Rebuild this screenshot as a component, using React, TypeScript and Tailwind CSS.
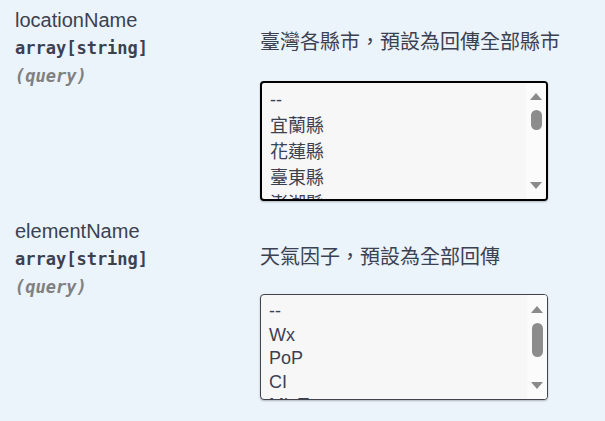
import React from "react";

const counties = [
  "--",
  "宜蘭縣",
  "花蓮縣",
  "臺東縣",
  "澎湖縣",
  "金門縣",
  "連江縣",
  "臺北市",
  "新北市",
  "桃園市",
  "臺中市",
  "臺南市",
  "高雄市",
  "基隆市",
  "新竹縣",
  "新竹市",
  "苗栗縣",
  "彰化縣",
  "南投縣",
  "雲林縣",
  "嘉義縣",
  "嘉義市",
  "屏東縣",
];

const elements = ["--", "Wx", "PoP", "CI", "MinT", "MaxT"];

const sans = "font-['Liberation_Sans','Noto_Sans_CJK_TC',sans-serif]";
const mono = "font-['DejaVu_Sans_Mono','Liberation_Mono',monospace]";

function Arrow({ down }: { down?: boolean }) {
  return (
    <svg width="12" height="7" viewBox="0 0 12 7" className="shrink-0">
      <path d={down ? "M0 0H12L6 7Z" : "M6 0L12 7H0Z"} fill="#8a8a8a" />
    </svg>
  );
}

interface ListProps {
  options: string[];
  focused?: boolean;
  rowClass: string;
  listClass: string;
  boxClass: string;
  barClass: string;
  thumbClass: string;
}

// multi-select listbox, drawn by hand so the classic scrollbar shows
function ListBox({ options, focused, rowClass, listClass, boxClass, barClass, thumbClass }: ListProps) {
  return (
    <div
      role="listbox"
      aria-multiselectable
      className={`${sans} flex w-[288px] overflow-hidden rounded-[4px] bg-[#f7f7f7] text-[18px] text-[#3b4151] shadow-[0_1px_2px_0_rgba(0,0,0,0.25)] ${
        focused ? "border-2 border-black" : "border border-[#41444e]"
      } ${boxClass}`}
    >
      <div className={`min-w-0 flex-1 overflow-hidden ${listClass}`}>
        {options.map((o) => (
          <div key={o} role="option" className={`whitespace-nowrap px-[8px] ${rowClass}`}>
            {o}
          </div>
        ))}
      </div>
      <div className={`flex w-[20px] shrink-0 flex-col items-center bg-[#fbfbfb] ${barClass}`}>
        <Arrow />
        <div className={`w-[11px] rounded-full bg-[#8c8c8c] ${thumbClass}`} />
        <div className="flex-1" />
        <Arrow down />
      </div>
    </div>
  );
}

interface ParamProps {
  name: string;
  description: string;
  descClass: string;
  gapClass: string;
  children: React.ReactNode;
}

function ParamRow({ name, description, descClass, gapClass, children }: ParamProps) {
  return (
    <div className="flex">
      <div className="w-[260px] shrink-0 pl-[15px] pt-[9px]">
        <div className={`${sans} text-[20px] leading-[23px] text-[#3b4151]`}>{name}</div>
        <div className={`${mono} mt-[6px] text-[17px] leading-[20px] font-bold text-[#3b4151]`}>
          array[string]
        </div>
        <div className={`${mono} mt-[8px] text-[17px] leading-[20px] font-semibold italic text-[#808080]`}>
          (query)
        </div>
      </div>
      <div className="flex flex-col">
        <p className={`${sans} text-[20px] leading-[24px] text-[#3b4151] ${descClass}`}>{description}</p>
        <div className={gapClass}>{children}</div>
      </div>
    </div>
  );
}

export default function App() {
  return (
    <div className="h-[421px] w-[605px] overflow-hidden bg-[#ebf3fb]">
      <ParamRow
        name="locationName"
        description="臺灣各縣市，預設為回傳全部縣市"
        descClass="mt-[30px]"
        gapClass="mt-[27px]"
      >
        <ListBox
          options={counties}
          focused
          rowClass="leading-[26px]"
          listClass="pt-[4px]"
          boxClass="h-[120px]"
          barClass="pt-[10px] pb-[10px]"
          thumbClass="mt-[10px] h-[20px]"
        />
      </ParamRow>
      <div className="mt-[10px]">
        <ParamRow
          name="elementName"
          description="天氣因子，預設為全部回傳"
          descClass="mt-[34px]"
          gapClass="mt-[25px]"
        >
          <ListBox
            options={elements}
            rowClass="leading-[23.5px]"
            listClass="pt-[5px]"
            boxClass="h-[106px]"
            barClass="pt-[11px] pb-[10px]"
            thumbClass="mt-[10px] h-[34px]"
          />
        </ParamRow>
      </div>
    </div>
  );
}
